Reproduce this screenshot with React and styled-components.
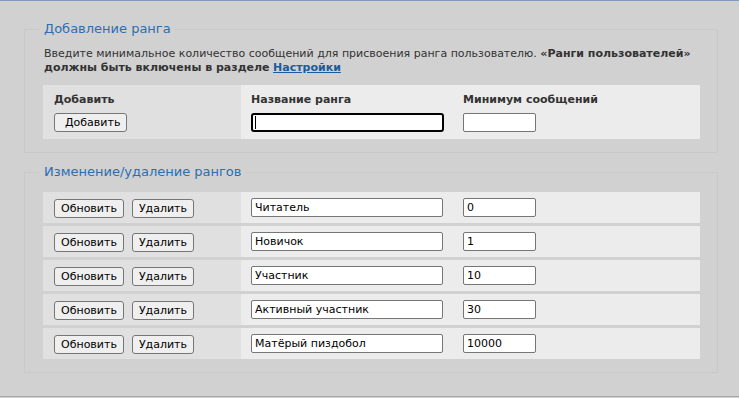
import React from "react";
import styled, { createGlobalStyle } from "styled-components";

const Global = createGlobalStyle`
  html, body { margin: 0; padding: 0; background: #d1d1d1; }
  body { font-family: "DejaVu Sans", Verdana, sans-serif; font-size: 11px; color: #333; }
`;

const Page = styled.div`
  background: #d1d1d1;
  border-top: 1px solid #7f9cbb;
  border-bottom: 1px solid #a6a6a6;
  padding: 20px 21px 23px 24px;
`;

const Fieldset = styled.fieldset`
  margin: ${(p) => (p.$second ? "11px 0 0" : "0")};
  border: 1px solid #c9c9c9;
  padding: ${(p) => p.$pt}px 17px 13px 18px;
  min-width: 0;
`;

const Legend = styled.legend`
  margin-left: -3px;
  padding: 0 4px;
  font-size: 13px;
  line-height: 16px;
  color: #2a6fb4;
`;

const Description = styled.p`
  margin: 0 0 10px 1px;
  line-height: 14px;
  color: #333;
`;

const Link = styled.a`
  color: #1a5c9c;
  text-decoration: underline;
  font-weight: bold;
`;

const Rows = styled.div`
  display: flex;
  flex-direction: column;
  gap: 3px;
`;

const Row = styled.div`
  display: grid;
  grid-template-columns: 198px 212px 1fr;
  min-height: ${(p) => (p.$header ? 54 : 31)}px;
`;

const Cell = styled.div`
  background: ${(p) => (p.$first ? "#dfe0df" : "#ececec")};
  padding: ${(p) => (p.$header ? "8px 10px 7px" : "0 10px")};
  padding-left: ${(p) => (p.$first ? 11 : 10)}px;
  display: flex;
  flex-direction: ${(p) => (p.$header ? "column" : "row")};
  align-items: ${(p) => (p.$header ? "flex-start" : "center")};
  gap: ${(p) => (p.$header ? 6 : 8)}px;
`;

const Label = styled.span`
  font-weight: bold;
  line-height: 14px;
  color: #333;
`;

const Button = styled.button`
  box-sizing: border-box;
  height: 19px;
  padding: ${(p) => (p.$wide ? "0 6px 0 10px" : "0 6px")};
  margin-top: ${(p) => (p.$shift ? 2 : 0)}px;
  font-family: "DejaVu Sans", Verdana, sans-serif;
  font-size: 11px;
  color: #000;
  background: #efefef;
  border: 1px solid #767676;
  border-radius: 3px;
`;

const InputWrap = styled.span`
  position: relative;
  display: inline-flex;
`;

const Caret = styled.span`
  position: absolute;
  left: 4px;
  top: 3px;
  width: 1px;
  height: 13px;
  background: #000;
`;

const Input = styled.input`
  box-sizing: border-box;
  width: ${(p) => p.$w}px;
  height: 19px;
  padding: 0 3px;
  font-family: "DejaVu Sans", Verdana, sans-serif;
  font-size: 11px;
  color: #000;
  background: #fff;
  border: ${(p) => (p.$focused ? "2px solid #000" : "1px solid #767676")};
  border-radius: ${(p) => (p.$focused ? 3 : 2)}px;
  outline: none;
  caret-color: transparent;
`;

const ranks = [
  { name: "Читатель", min: "0" },
  { name: "Новичок", min: "1" },
  { name: "Участник", min: "10" },
  { name: "Активный участник", min: "30" },
  { name: "Матёрый пиздобол", min: "10000" },
];

export default function App() {
  return (
    <>
      <Global />
      <Page>
        <Fieldset $pt={10}>
          <Legend>Добавление ранга</Legend>
          <Description>
            Введите минимальное количество сообщений для присвоения ранга пользователю.{" "}
            <b>«Ранги пользователей»</b>
            <br />
            <b>должны быть включены в разделе</b> <Link href="#">Настройки</Link>
          </Description>
          <Row $header>
            <Cell $first $header>
              <Label>Добавить</Label>
              <Button $wide>Добавить</Button>
            </Cell>
            <Cell $header>
              <Label>Название ранга</Label>
              <InputWrap>
                <Input $w={193} $focused defaultValue="" />
                <Caret />
              </InputWrap>
            </Cell>
            <Cell $header>
              <Label>Минимум сообщений</Label>
              <Input $w={73} defaultValue="" />
            </Cell>
          </Row>
        </Fieldset>
        <Fieldset $second $pt={12}>
          <Legend>Изменение/удаление рангов</Legend>
          <Rows>
            {ranks.map((r) => (
              <Row key={r.name}>
                <Cell $first>
                  <Button $shift>Обновить</Button>
                  <Button $shift>Удалить</Button>
                </Cell>
                <Cell>
                  <Input $w={192} defaultValue={r.name} />
                </Cell>
                <Cell>
                  <Input $w={73} defaultValue={r.min} />
                </Cell>
              </Row>
            ))}
          </Rows>
        </Fieldset>
      </Page>
    </>
  );
}
